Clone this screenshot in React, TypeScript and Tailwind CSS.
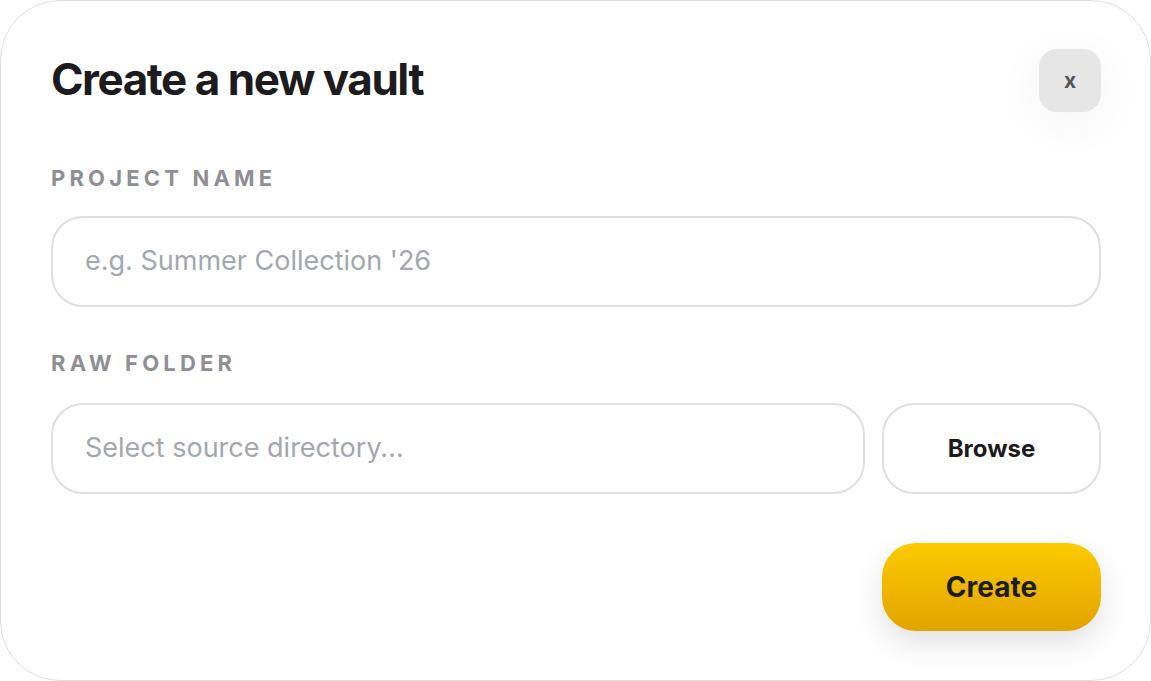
import React from "react";

export default function App() {
  return (
    <div className="w-[1151px] h-[681px] bg-white">
      <div
        className="w-[1151px] h-[681px] bg-white border border-[#dedede] rounded-[60px] pl-[50px] pr-[49px] pt-[48px] flex flex-col"
        style={{ fontFamily: "Inter, 'Noto Sans', sans-serif" }}
      >
        <div className="flex items-start justify-between">
          <h1 className="text-[44px] leading-none font-bold tracking-[-0.033em] text-[#1c1c1e] mt-[8px]">
            Create a new vault
          </h1>
          <button className="w-[62px] h-[63px] rounded-[18px] bg-[#e6e6e6] flex items-center justify-center text-[21px] font-bold text-[#56565a] shadow-[0_10px_50px_rgba(0,0,0,0.05)]">
            x
          </button>
        </div>

        <label className="mt-[55px] text-[22px] leading-none font-bold tracking-[0.19em] text-[#8e8e93]">
          PROJECT NAME
        </label>
        <div className="mt-[27px] h-[91px] w-full rounded-[32px] border-2 border-[#dfdfdf] flex items-center pl-[32px]">
          <span className="text-[27px] text-[#a3a7ae]">e.g. Summer Collection '26</span>
        </div>

        <label className="mt-[45px] text-[22px] leading-none font-bold tracking-[0.19em] text-[#8e8e93]">
          RAW FOLDER
        </label>
        <div className="mt-[29px] flex gap-[17px]">
          <div className="flex-1 h-[91px] rounded-[32px] border-2 border-[#dfdfdf] flex items-center pl-[32px]">
            <span className="text-[27px] text-[#a3a7ae]">Select source directory...</span>
          </div>
          <button className="w-[219px] h-[91px] rounded-[32px] border-2 border-[#dfdfdf] bg-white flex items-center justify-center text-[24px] font-bold text-[#1c1c1e]">
            Browse
          </button>
        </div>

        <div className="mt-[49px] flex justify-end">
          <button className="w-[219px] h-[88px] rounded-[34px] bg-gradient-to-b from-[#fdcb00] to-[#e2a300] flex items-center justify-center text-[28px] font-bold text-[#1c1c1e] shadow-[0_12px_30px_rgba(0,0,0,0.12)]">
            Create
          </button>
        </div>
      </div>
    </div>
  );
}
